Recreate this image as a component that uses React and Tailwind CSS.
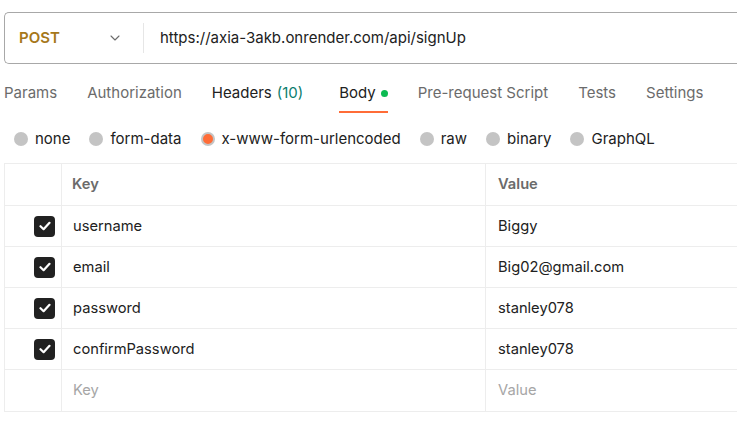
import { ChevronDown } from "lucide-react";

const tabs = [
  { label: "Params" },
  { label: "Authorization" },
  { label: "Headers", count: "(10)" },
  { label: "Body", active: true },
  { label: "Pre-request Script" },
  { label: "Tests" },
  { label: "Settings" },
];

const bodyTypes = ["none", "form-data", "x-www-form-urlencoded", "raw", "binary", "GraphQL"];

const rows = [
  { key: "username", value: "Biggy" },
  { key: "email", value: "Big02@gmail.com" },
  { key: "password", value: "stanley078" },
  { key: "confirmPassword", value: "stanley078" },
];

function Check() {
  return (
    <div className="w-[21px] h-[21px] rounded-[4px] bg-[#212121] flex items-center justify-center">
      <svg width="12" height="10" viewBox="0 0 12 10" fill="none">
        <path d="M1.5 5.2 L4.6 8.2 L10.5 1.8" stroke="#fff" strokeWidth="2.2" strokeLinecap="round" strokeLinejoin="round" />
      </svg>
    </div>
  );
}

export default function App() {
  return (
    <div className="w-[737px] h-[422px] bg-white overflow-hidden font-['Inter',sans-serif] text-[#212121]">
      {/* url bar */}
      <div className="pt-[12px] pl-[4px]">
        <div className="h-[52px] border border-r-0 border-[#a8a8a8] rounded-l-[5px] flex items-center w-[740px]">
          <div className="w-[138px] flex items-center pl-[14px] pr-[20px] justify-between">
            <span className="text-[15px] font-semibold text-[#a6781a]">POST</span>
            <ChevronDown size={16} strokeWidth={1.6} className="text-[#6b6b6b]" />
          </div>
          <div className="w-px h-[30px] bg-[#e6e6e6]" />
          <span className="pl-[16px] text-[15px]">https://axia-3akb.onrender.com/api/signUp</span>
        </div>
      </div>

      {/* tabs */}
      <div className="flex items-end h-[49px] pl-[4px] gap-[30px] text-[15px] leading-[20px]">
        {tabs.map((t) => (
          <div
            key={t.label}
            className={`relative pb-[10px] flex items-center ${t.active ? "ml-[6px]" : ""} ${t.active || t.count ? "text-[#212121]" : "text-[#6b6b6b]"}`}
          >
            {t.label}
            {t.count && <span className="ml-[5px] text-[#0b7d6e]">{t.count}</span>}
            {t.active && <span className="ml-[5px] w-[7px] h-[7px] rounded-full bg-[#0cbb52]" />}
            {t.active && <span className="absolute left-0 right-0 bottom-0 h-[2px] bg-[#ff6c37]" />}
          </div>
        ))}
      </div>

      {/* body type radios */}
      <div className="flex items-center h-[50px] pt-[2px] pl-[14px] gap-[19px] text-[15px]">
        {bodyTypes.map((b) => {
          const sel = b === "x-www-form-urlencoded";
          return (
            <div key={b} className="flex items-center gap-[7px]">
              {sel ? (
                <span className="w-[14px] h-[14px] rounded-full bg-[#ff6c37] border-[2px] border-[#c4c4c4]" />
              ) : (
                <span className="w-[14px] h-[14px] rounded-full bg-[#c4c4c4]" />
              )}
              <span>{b}</span>
            </div>
          );
        })}
      </div>

      {/* table */}
      <div className="ml-[4px] w-[740px] border-t border-l border-b border-[#ededed] text-[14.7px]">
        <div className="flex h-[42px] border-b border-[#ededed] font-semibold text-[#6b6b6b]">
          <div className="w-[57px] border-r border-[#ededed]" />
          <div className="w-[424px] border-r border-[#ededed] flex items-center pl-[10px]">Key</div>
          <div className="flex-1 flex items-center pl-[12px]">Value</div>
        </div>
        {rows.map((r) => (
          <div key={r.key} className="flex h-[41px] border-b border-[#ededed]">
            <div className="w-[57px] border-r border-[#ededed] flex items-center justify-end pr-[6px]">
              <Check />
            </div>
            <div className="w-[424px] border-r border-[#ededed] flex items-center pl-[11px]">{r.key}</div>
            <div className="flex-1 flex items-center pl-[12px]">{r.value}</div>
          </div>
        ))}
        <div className="flex h-[41px] text-[#a6a6a6]">
          <div className="w-[57px] border-r border-[#ededed]" />
          <div className="w-[424px] border-r border-[#ededed] flex items-center pl-[11px]">Key</div>
          <div className="flex-1 flex items-center pl-[12px]">Value</div>
        </div>
      </div>
    </div>
  );
}
